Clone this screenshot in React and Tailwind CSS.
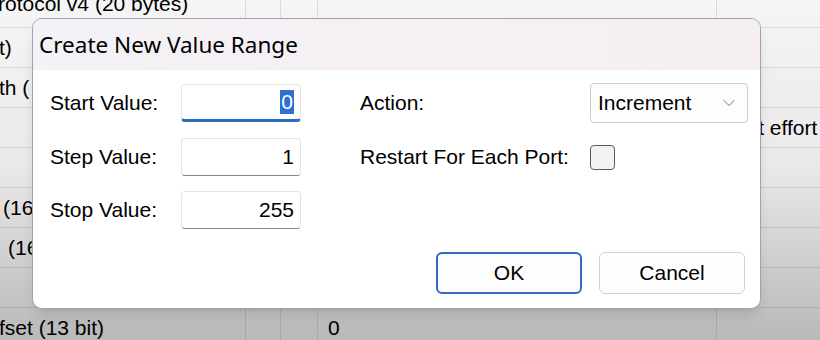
import { ChevronDown } from "lucide-react"

// visible fragments of the table that sits behind the dialog
const rows = [
  { a: "Protocol v4 (20 bytes)", cls: "-ml-[16px] -mt-[20px]" },
  { a: "t)", cls: "-ml-[1px]" },
  { a: "th (", cls: "-ml-[1px]" },
  { a: "", e: "Best effort" },
  { a: "" },
  { a: "(16", cls: "ml-[3px]" },
  { a: "(16", cls: "ml-[8px]" },
  { a: "" },
  { a: "fset (13 bit)", d: "0", cls: "-ml-[1px]" },
]

function BgRow({ r, i }) {
  return (
    <div className={`flex ${i === 0 ? "h-[28px]" : "h-[40px]"} border-b border-black/10`}>
      <div className="w-[246px] shrink-0 flex items-center overflow-hidden border-r border-black/10">
        <span className={`whitespace-nowrap ${r.cls || ""}`}>{r.a}</span>
      </div>
      <div className="w-[35px] shrink-0 border-r border-black/10" />
      <div className="w-[37px] shrink-0 border-r border-black/10" />
      <div className="w-[399px] shrink-0 flex items-center pl-[10px] border-r border-black/10">{r.d}</div>
      <div className="flex-1 flex items-center pl-[5px] whitespace-nowrap">{r.e}</div>
    </div>
  )
}

function TextBox({ value, focused }) {
  return (
    <div
      className={`h-[38px] w-[120px] rounded-[4px] bg-white border border-[#e3e3e3] flex items-center justify-end pr-[6px] ${
        focused ? "border-b-[3px] border-b-[#2e6bc1]" : "border-b-[#8a8a8a]"
      }`}
    >
      {focused ? (
        <span className="bg-[#2e6fd0] text-white px-[1px] leading-[24px]">{value}</span>
      ) : (
        <span>{value}</span>
      )}
    </div>
  )
}

export default function App() {
  return (
    <div className="relative w-[820px] h-[340px] overflow-hidden bg-[#c4c4c4] text-[21px] text-black font-['Liberation_Sans',Arial,sans-serif]">
      {/* background table, darkened by the dialog's shadow */}
      <div className="h-[340px] bg-linear-to-b from-[#f5f5f5] via-[#e9e9e9] to-[#b9b9b9]">
        {rows.map((r, i) => (
          <BgRow key={i} r={r} i={i} />
        ))}
      </div>

      {/* dialog */}
      <div className="absolute left-[32px] top-[18px] w-[729px] h-[291px] rounded-[10px] border border-[#a3a3a3] bg-white overflow-hidden shadow-lg flex flex-col">
        <div className="h-[51px] shrink-0 bg-linear-to-r from-[#f3f2f6] via-[#f6eff4] to-[#f5eef2] flex items-center pl-[6px] font-['Noto_Sans',sans-serif] text-[22.5px]">
          Create New Value Range
        </div>
        <div className="flex-1 flex flex-col pl-[17px] pr-[13px] pt-[13px]">
          <div className="grid grid-cols-[131px_120px_59px_230px_158px] items-center gap-y-[15px]">
            <div>Start Value:</div>
            <TextBox value="0" focused />
            <div />
            <div>Action:</div>
            <div className="h-[40px] rounded-[4px] border border-[#cdcdcd] bg-[#fdfdfd] flex items-center pl-[7px] pr-[8px] justify-between">
              <span>Increment</span>
              <ChevronDown size={20} strokeWidth={1} className="text-[#555]" />
            </div>

            <div>Step Value:</div>
            <TextBox value="1" />
            <div />
            <div>Restart For Each Port:</div>
            <div className="w-[25px] h-[25px] rounded-[4px] border-[1.5px] border-[#5a5a5a] bg-[#f3f3f3]" />

            <div>Stop Value:</div>
            <TextBox value="255" />
          </div>
          <div className="flex justify-end gap-[17px] mt-auto mb-[14px] pr-[2px]">
            <button className="w-[146px] h-[42px] rounded-[6px] border-2 border-[#2e6bc1] bg-[#fdfdfd]">OK</button>
            <button className="w-[146px] h-[42px] rounded-[6px] border border-[#d0d0d0] bg-[#fdfdfd]">Cancel</button>
          </div>
        </div>
      </div>
    </div>
  )
}
